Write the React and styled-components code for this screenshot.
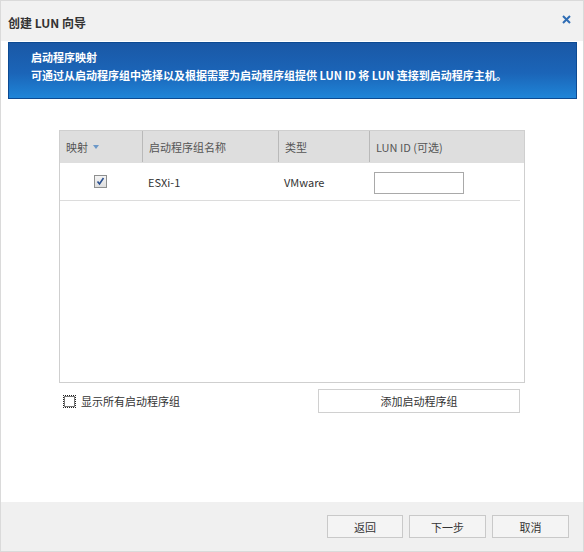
import React from "react";
import styled, { createGlobalStyle } from "styled-components";

const GlobalStyle = createGlobalStyle`
  html, body {
    margin: 0;
    padding: 0;
    background: #ffffff;
  }
  body {
    font-family: "Noto Sans CJK SC", "Open Sans", "Liberation Sans", sans-serif;
    font-size: 11px;
    color: #333;
  }
`;

const Dialog = styled.div`
  width: 584px;
  height: 552px;
  box-sizing: border-box;
  border: 1px solid #dadada;
  display: flex;
  flex-direction: column;
  background: #fff;
`;

const Header = styled.div`
  height: 40px;
  flex: none;
  background: #f1f1f1;
  display: flex;
  align-items: center;
  justify-content: space-between;
  padding: 0 12px 0 7px;
`;

const Title = styled.div`
  font-size: 12px;
  font-weight: bold;
  color: #333;
  padding-top: 2px;
`;

const Close = styled.span`
  display: flex;
  margin-top: -3px;
`;

const Body = styled.div`
  flex: 1;
  padding: 1px 6px 0 7px;
  display: flex;
  flex-direction: column;
`;

const Banner = styled.div`
  height: 57px;
  box-sizing: border-box;
  border: 1px solid #0c4a92;
  background: linear-gradient(to bottom, #1a58a6 0%, #1b65b8 55%, #1f85d8 100%);
  color: #fff;
  font-weight: bold;
  font-size: 11px;
  line-height: 18px;
  padding-top: 5px;
  padding-left: 22px;
`;

const Content = styled.div`
  padding: 31px 0 0 51px;
  width: 466px;
`;

const Table = styled.div`
  height: 253px;
  box-sizing: border-box;
  border: 1px solid #cfcfcf;
  background: #fff;
`;

const Row = styled.div`
  display: grid;
  grid-template-columns: 83px 136px 91px 1fr;
  align-items: center;
  height: ${(p) => (p.$head ? "32px" : "38px")};
  background: ${(p) => (p.$head ? "#dedede" : "#fff")};
  border-bottom: 1px solid ${(p) => (p.$head ? "#dedede" : "#dcdcdc")};
  margin-right: ${(p) => (p.$head ? "0" : "4px")};
  box-sizing: border-box;
`;

const Th = styled.div`
  height: 100%;
  display: flex;
  align-items: center;
  padding-left: 6px;
  color: #555;
  font-size: 11px;
  border-left: ${(p) => (p.$first ? "none" : "1px solid #b9b9b9")};
  margin-left: ${(p) => (p.$first ? "0" : "-1px")};
`;

const Td = styled.div`
  display: flex;
  align-items: center;
  justify-content: ${(p) => (p.$center ? "center" : "flex-start")};
  padding-left: ${(p) => (p.$center ? "0" : "5px")};
  color: #333;
  font-size: 11px;
`;

const SortArrow = styled.span`
  width: 0;
  height: 0;
  border-left: 3.5px solid transparent;
  border-right: 3.5px solid transparent;
  border-top: 4px solid #6c98c8;
  margin-left: 5px;
  margin-top: 1px;
`;

const Check = styled.span`
  width: 11px;
  height: 11px;
  border: 1px solid #8e8f8f;
  background: linear-gradient(#f4f4f4, #dedede);
  display: flex;
  align-items: center;
  justify-content: center;
  margin-left: -2px;
`;

const IdInput = styled.div`
  width: 90px;
  height: 22px;
  border: 1px solid #a9a9a9;
  background: #fff;
  margin-left: -1px;
  margin-top: 2px;
  box-sizing: border-box;
`;

const Below = styled.div`
  display: flex;
  align-items: center;
  justify-content: space-between;
  margin-top: 6px;
`;

const CheckLabel = styled.label`
  display: flex;
  align-items: center;
  gap: 5px;
  color: #333;
  font-size: 11px;
  margin-left: 4px;
`;

const EmptyBox = styled.span`
  width: 11px;
  height: 11px;
  border: 1px dotted #222;
  outline: 1px solid #777;
  outline-offset: -2px;
  background: #fff;
`;

const Button = styled.div`
  width: ${(p) => p.$w || 76}px;
  height: ${(p) => p.$h || 23}px;
  margin-right: ${(p) => p.$mr || 0}px;
  box-sizing: border-box;
  border: 1px solid ${(p) => (p.$light ? "#d0d0d0" : "#c9c9c9")};
  background: ${(p) => (p.$light ? "#ffffff" : "#f4f4f4")};
  display: flex;
  align-items: center;
  justify-content: center;
  color: #333;
  font-size: 11px;
`;

const Footer = styled.div`
  height: 49px;
  flex: none;
  background: #f0f0f0;
  display: flex;
  justify-content: flex-end;
  align-items: flex-start;
  padding: 13px 14px 0 0;
  gap: 6px;
  box-sizing: border-box;
`;

export default function App() {
  return (
    <>
      <GlobalStyle />
      <Dialog>
        <Header>
          <Title>创建 LUN 向导</Title>
          <Close>
            <svg width="9" height="9" viewBox="0 0 9 9">
              <path d="M1 1L8 8M8 1L1 8" stroke="#2f6db5" strokeWidth="2" />
            </svg>
          </Close>
        </Header>
        <Body>
          <Banner>
            <div>启动程序映射</div>
            <div>可通过从启动程序组中选择以及根据需要为启动程序组提供 LUN ID 将 LUN 连接到启动程序主机。</div>
          </Banner>
          <Content>
            <Table>
              <Row $head>
                <Th $first>
                  映射
                  <SortArrow />
                </Th>
                <Th>启动程序组名称</Th>
                <Th>类型</Th>
                <Th>LUN ID (可选)</Th>
              </Row>
              <Row>
                <Td $center>
                  <Check>
                    <svg width="9" height="9" viewBox="0 0 9 9">
                      <path d="M1.5 4.5L3.5 7L7.5 1" stroke="#2a4f8f" strokeWidth="1.6" fill="none" />
                    </svg>
                  </Check>
                </Td>
                <Td>ESXi-1</Td>
                <Td>VMware</Td>
                <Td>
                  <IdInput />
                </Td>
              </Row>
            </Table>
            <Below>
              <CheckLabel>
                <EmptyBox />
                显示所有启动程序组
              </CheckLabel>
              <Button $light $w={202} $h={24} $mr={5}>添加启动程序组</Button>
            </Below>
          </Content>
        </Body>
        <Footer>
          <Button>返回</Button>
          <Button $w={77}>下一步</Button>
          <Button $w={77}>取消</Button>
        </Footer>
      </Dialog>
    </>
  );
}
